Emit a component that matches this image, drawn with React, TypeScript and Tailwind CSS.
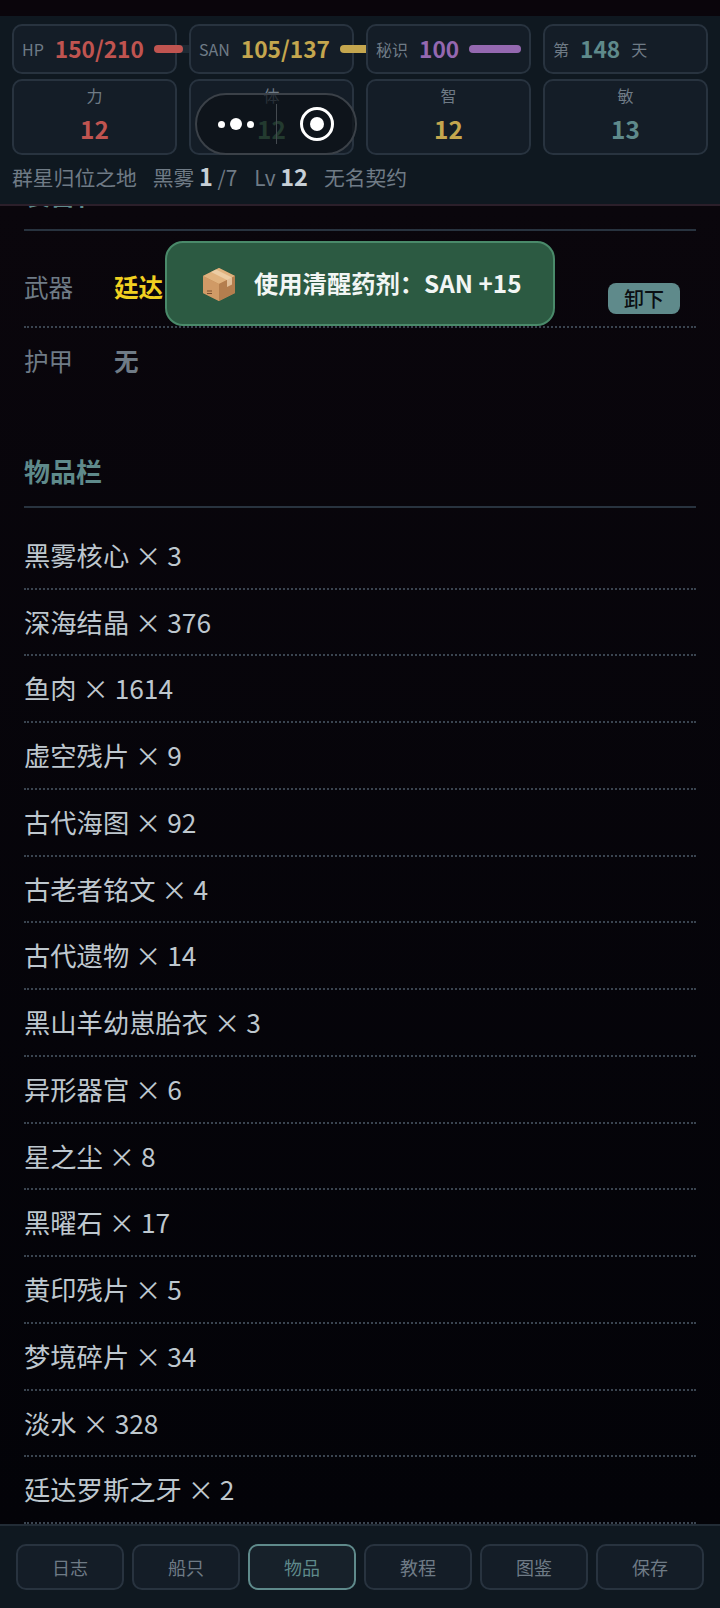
const items = [
  ["黑雾核心", 3],
  ["深海结晶", 376],
  ["鱼肉", 1614],
  ["虚空残片", 9],
  ["古代海图", 92],
  ["古老者铭文", 4],
  ["古代遗物", 14],
  ["黑山羊幼崽胎衣", 3],
  ["异形器官", 6],
  ["星之尘", 8],
  ["黑曜石", 17],
  ["黄印残片", 5],
  ["梦境碎片", 34],
  ["淡水", 328],
  ["廷达罗斯之牙", 2],
] as const;

const attrs = [
  { label: "力", value: 12, color: "text-[#c05450]" },
  { label: "体", value: 12, color: "text-[#5a9a6a]" },
  { label: "智", value: 12, color: "text-[#c4a64e]" },
  { label: "敏", value: 13, color: "text-[#5f8a8b]" },
];

const tabs = ["日志", "船只", "物品", "教程", "图鉴", "保存"];

const cardCls = "rounded-[10px] border-2 border-[#28333f] bg-[#141d27]";

const Bar = ({ track, fill, color }: { track: string; fill: string; color: string }) => (
  <div className={`h-2 shrink-0 rounded-full bg-[#1e2933] ${track}`}>
    <div className={`h-2 rounded-full ${fill} ${color}`} />
  </div>
);

const BoxIcon = () => (
  <svg width="36" height="36" viewBox="0 0 36 36" className="shrink-0">
    <path d="M18 2 L34 10 L34 27 L18 35 L2 27 L2 10 Z" fill="#c08a58" />
    <path d="M18 2 L34 10 L18 18 L2 10 Z" fill="#e0b27e" />
    <path d="M18 18 L34 10 L34 27 L18 35 Z" fill="#b47e4e" />
    <path d="M2 10 L18 18 L18 35 L2 27 Z" fill="#d09a66" />
    <path d="M10 6 L26 14 L26 21 L31 18.5 L31 11.5 L15 3.5 Z" fill="#f0d4b0" opacity="0.75" />
    <path d="M6 25 h5 M6 27.5 h5" stroke="#7a4d2c" strokeWidth="1" />
  </svg>
);

export default function App() {
  return (
    <div className="relative flex h-[1608px] w-[720px] flex-col overflow-hidden bg-[#0a070d] font-['Noto_Sans_CJK_SC','Noto_Sans',sans-serif]">
      {/* status bar strip */}
      <div className="h-4 shrink-0 bg-[#0a050b]" />

      {/* Top stats */}
      <header className="relative z-10 h-[190px] shrink-0 border-b-2 border-[#2b1f2a] bg-[#0f1820] px-3 pt-2">
        <div className="grid grid-cols-4 gap-x-3">
          <div className={`flex h-[50px] items-center gap-[11px] px-2 ${cardCls}`}>
            <span className="text-base whitespace-nowrap text-[#6f7b86]">HP</span>
            <span className="text-[22.7px] font-bold text-[#c05450]">150/210</span>
            <Bar track="-ml-px w-10" fill="w-[29px]" color="bg-[#c05450]" />
          </div>
          <div className={`relative flex h-[50px] items-center gap-[11px] px-2 ${cardCls}`}>
            <span className="text-base whitespace-nowrap text-[#6f7b86]">SAN</span>
            <span className="text-[22.7px] font-bold text-[#c4a64e]">105/137</span>
            <Bar track="-ml-px w-10" fill="w-[31px]" color="bg-[#c4a64e]" />
          </div>
          <div className={`relative flex h-[50px] items-center gap-[11px] px-2 ${cardCls}`}>
            <span className="text-base whitespace-nowrap text-[#6f7b86]">秘识</span>
            <span className="text-[22.7px] font-bold text-[#9468b0]">100</span>
            <Bar track="-ml-px w-[52px]" fill="w-full" color="bg-[#9468b0]" />
          </div>
          <div className={`relative flex h-[50px] items-center gap-[11px] px-2 ${cardCls}`}>
            <span className="text-base whitespace-nowrap text-[#6f7b86]">第</span>
            <span className="text-[22.7px] font-bold text-[#5f8a8b]">148</span>
            <span className="text-base whitespace-nowrap text-[#6f7b86]">天</span>
          </div>
        </div>

        <div className="mt-[5px] grid grid-cols-4 gap-x-3">
          {attrs.map((a) => (
            <div key={a.label} className={`flex h-[76px] flex-col items-center pt-0.5 ${cardCls}`}>
              <span className="text-base leading-6 text-[#6f7b86]">{a.label}</span>
              <span className={`mt-1 text-[24.4px] leading-9 font-bold ${a.color}`}>{a.value}</span>
            </div>
          ))}
        </div>

        <div className="mt-[5px] flex items-center whitespace-nowrap text-[20.8px] leading-8 text-[#6f7b86]">
          <span>群星归位之地</span>
          <span className="ml-4">黑雾 <b className="text-[23.5px] font-bold text-[#c6cfd6]">1</b> /7</span>
          <span className="ml-[17px]">Lv <b className="text-[23.5px] font-bold text-[#c6cfd6]">12</b></span>
          <span className="ml-4">无名契约</span>
        </div>
      </header>

      {/* Scrolled content */}
      <main className="flex-1 overflow-hidden bg-gradient-to-b from-[#0a060c] to-[#030308] px-6">
        <div className="-mt-[36px]">
          <h2 className="border-b-2 border-[#28333f] pb-3 text-[26px] leading-[47px] font-bold text-[#5f8a8b]">装备栏</h2>

          <div className="mt-[18px] flex h-[79px] border-b-2 border-dotted border-[#3a4450]">
            <span className="w-[91px] pt-[18px] text-[24.6px] leading-[38px] text-[#6f7b86]">武器</span>
            <span className="-ml-px pt-[18px] text-[24.6px] leading-[38px] font-bold text-[#f0d020]">廷达罗斯之牙</span>
            <button className="mt-[34px] mr-4 ml-auto h-[31px] w-[72px] rounded-lg bg-[#5f8a8b] text-xl leading-[31px] font-medium text-[#0a0e12]">卸下</button>
          </div>
          <div className="flex pt-[13px]">
            <span className="w-[91px] text-[24.6px] leading-[38px] text-[#6f7b86]">护甲</span>
            <span className="-ml-px text-[24.6px] leading-[38px] font-bold text-[#6f7b86]">无</span>
          </div>

          <h2 className="mt-[68px] border-b-2 border-[#28333f] pb-3 text-[26px] leading-[47px] font-bold text-[#5f8a8b]">物品栏</h2>

          <ul className="mt-[15px]">
            {items.map(([name, count]) => (
              <li key={name} className="border-b-2 border-dotted border-[#3a4450] pt-3 pb-3 text-[26.3px] leading-[40.74px] text-[#bec7ce]">
                {name} × {count}
              </li>
            ))}
          </ul>
        </div>
      </main>

      {/* Bottom tabs */}
      <nav className="grid h-[84px] shrink-0 grid-cols-6 gap-x-2 border-t-2 border-[#222c36] bg-[#0f1820] px-4 pt-[18px]">
        {tabs.map((t) => (
          <button
            key={t}
            className={
              t === "物品"
                ? "h-[46px] rounded-[10px] border-2 border-[#5f8a8b] bg-[#17212a] text-lg text-[#5f8a8b]"
                : "h-[46px] rounded-[10px] border-2 border-[#28333f] bg-[#141d27] text-lg text-[#6f7b86]"
            }
          >
            {t}
          </button>
        ))}
      </nav>

      {/* Mini program capsule */}
      <div className="absolute top-[93px] left-[195px] z-20 flex h-[62px] w-[162px] items-center rounded-full border-2 border-[#3b4148] bg-[#0c1117]/70">
        <div className="flex w-[79px] items-center justify-end gap-[5px] pr-[22px]">
          <span className="h-[7px] w-[7px] rounded-full bg-white" />
          <span className="h-3 w-3 rounded-full bg-white" />
          <span className="h-[7px] w-[7px] rounded-full bg-white" />
        </div>
        <div className="h-[40px] w-px bg-[#444a50]" />
        <div className="ml-[23px] flex h-[34px] w-[34px] items-center justify-center rounded-full border-[3px] border-white">
          <span className="h-[14px] w-[14px] rounded-full bg-white" />
        </div>
      </div>

      {/* Toast */}
      <div className="absolute top-[241px] left-[165px] z-20 flex h-[85px] w-[390px] items-center gap-[17px] rounded-[18px] border-2 border-[#4a8a6a] bg-[#2c5a42] pl-[34px] text-[24.3px] font-bold text-[#f2f6f4]">
        <BoxIcon />
        <span className="whitespace-nowrap">使用清醒药剂：SAN +15</span>
      </div>
    </div>
  );
}
